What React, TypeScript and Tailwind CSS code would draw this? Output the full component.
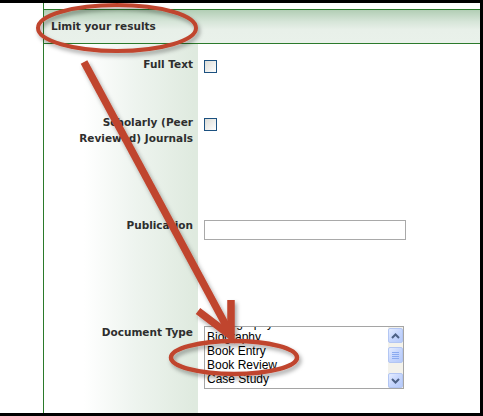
import React from "react";

const labelFont = { fontFamily: '"DejaVu Sans", Verdana, sans-serif' };

function Checkbox() {
  return (
    <div className="mt-[4px] w-[13px] h-[13px] border border-[#1c5180] bg-[linear-gradient(135deg,#dcdcd6_0%,#f4f4f2_70%,#ffffff_100%)]" />
  );
}

function ScrollBtn({ dir }: { dir: "up" | "down" }) {
  return (
    <div className="h-[15px] w-[15px] rounded-[2px] border border-[#b3c6f3] bg-[linear-gradient(135deg,#e4ecff_0%,#c6d6fd_50%,#b6cafa_100%)] flex items-center justify-center">
      <svg width="9" height="6" viewBox="0 0 9 6">
        {dir === "up" ? (
          <path d="M1 5 L4.5 1.5 L8 5" fill="none" stroke="#4d6185" strokeWidth="2" />
        ) : (
          <path d="M1 1 L4.5 4.5 L8 1" fill="none" stroke="#4d6185" strokeWidth="2" />
        )}
      </svg>
    </div>
  );
}

export default function App() {
  const items = ["Bibliography", "Biography", "Book Entry", "Book Review", "Case Study"];
  return (
    <div className="relative w-[483px] h-[416px] bg-black pt-[3px] pr-[3px] pb-[3px] overflow-hidden">
      <div className="flex h-full bg-white">
        <div className="w-[43px] shrink-0" />
        <div className="flex-1 flex flex-col border-l border-[#2b7a2b] pt-[6px]">
          <div
            className="h-[35px] border-y border-[#2b7a2b] bg-[linear-gradient(to_bottom,#b2ceb5_0%,#d6e5d8_35%,#e8f0e9_60%,#e9f1ea_100%)] flex items-center pl-[7px] text-[10.5px] font-bold text-[#2e2e2e]"
            style={labelFont}
          >
            Limit your results
          </div>
          <div
            className="flex-1 pt-[12px] bg-[linear-gradient(to_right,#ffffff_0px,#ffffff_40px,#eef4ef_90px,#dfeadf_150px,#dfeadf_154px,#ffffff_154px)] text-[10.5px] font-bold text-[#2e2e2e] leading-[16px]"
            style={labelFont}
          >
            <div className="grid grid-cols-[154px_1fr]">
              <div className="text-right pr-[5px]">Full Text</div>
              <div className="pl-[6px]">
                <Checkbox />
              </div>
            </div>
            <div className="grid grid-cols-[154px_1fr] mt-[41px]">
              <div className="text-right pr-[5px]">
                Scholarly (Peer
                <br />
                Reviewed) Journals
              </div>
              <div className="pl-[6px]">
                <Checkbox />
              </div>
            </div>
            <div className="grid grid-cols-[154px_1fr] mt-[71px]">
              <div className="text-right pr-[5px]">Publication</div>
              <div className="pl-[6px]">
                <div className="mt-[3px] w-[202px] h-[20px] border border-[#a9a9a9] bg-white" />
              </div>
            </div>
            <div className="grid grid-cols-[154px_1fr] mt-[84px]">
              <div className="text-right pr-[5px]">Document Type</div>
              <div className="pl-[6px]">
                <div className="mt-[2px] w-[200px] h-[63px] border border-[#a5a5a5] bg-white flex">
                  <div
                    className="flex-1 overflow-hidden pl-[2px] text-[12px] leading-[14px] font-normal text-black"
                    style={{ fontFamily: '"Liberation Sans", Arial, sans-serif' }}
                  >
                    <div className="mt-[-11px]">
                      {items.map((t) => (
                        <div key={t} className="whitespace-nowrap">
                          {t}
                        </div>
                      ))}
                    </div>
                  </div>
                  <div className="w-[15px] h-full bg-[#f3f2ec] flex flex-col">
                    <div className="mt-[1px]">
                      <ScrollBtn dir="up" />
                    </div>
                    <div className="mt-[4px] h-[16px] w-[15px] rounded-[2px] border border-[#b3c6f3] bg-[linear-gradient(135deg,#e4ecff_0%,#c6d6fd_50%,#b6cafa_100%)] flex flex-col items-center justify-center gap-[1px]">
                      <div className="w-[7px] h-[1px] bg-[#8aaaf0]" />
                      <div className="w-[7px] h-[1px] bg-[#8aaaf0]" />
                      <div className="w-[7px] h-[1px] bg-[#8aaaf0]" />
                      <div className="w-[7px] h-[1px] bg-[#8aaaf0]" />
                    </div>
                    <div className="flex-1" />
                    <ScrollBtn dir="down" />
                  </div>
                </div>
              </div>
            </div>
          </div>
        </div>
      </div>

      <svg className="absolute left-0 top-0 pointer-events-none" width="483" height="416" viewBox="0 0 483 416">
        <defs>
          <filter id="sh" x="-20%" y="-20%" width="140%" height="140%">
            <feDropShadow dx="2" dy="3" stdDeviation="2" floodColor="#000" floodOpacity="0.35" />
          </filter>
        </defs>
        <g filter="url(#sh)" fill="none" stroke="#c0452f">
          <ellipse cx="117" cy="28" rx="79" ry="23" strokeWidth="4" />
          <ellipse cx="234" cy="357.5" rx="63" ry="16.5" strokeWidth="4.5" />
          <line x1="84" y1="62" x2="229" y2="331" strokeWidth="7.5" />
          <path d="M198 311 L231 336 L231 300" strokeWidth="7.5" strokeLinejoin="miter" />
        </g>
      </svg>
    </div>
  );
}
